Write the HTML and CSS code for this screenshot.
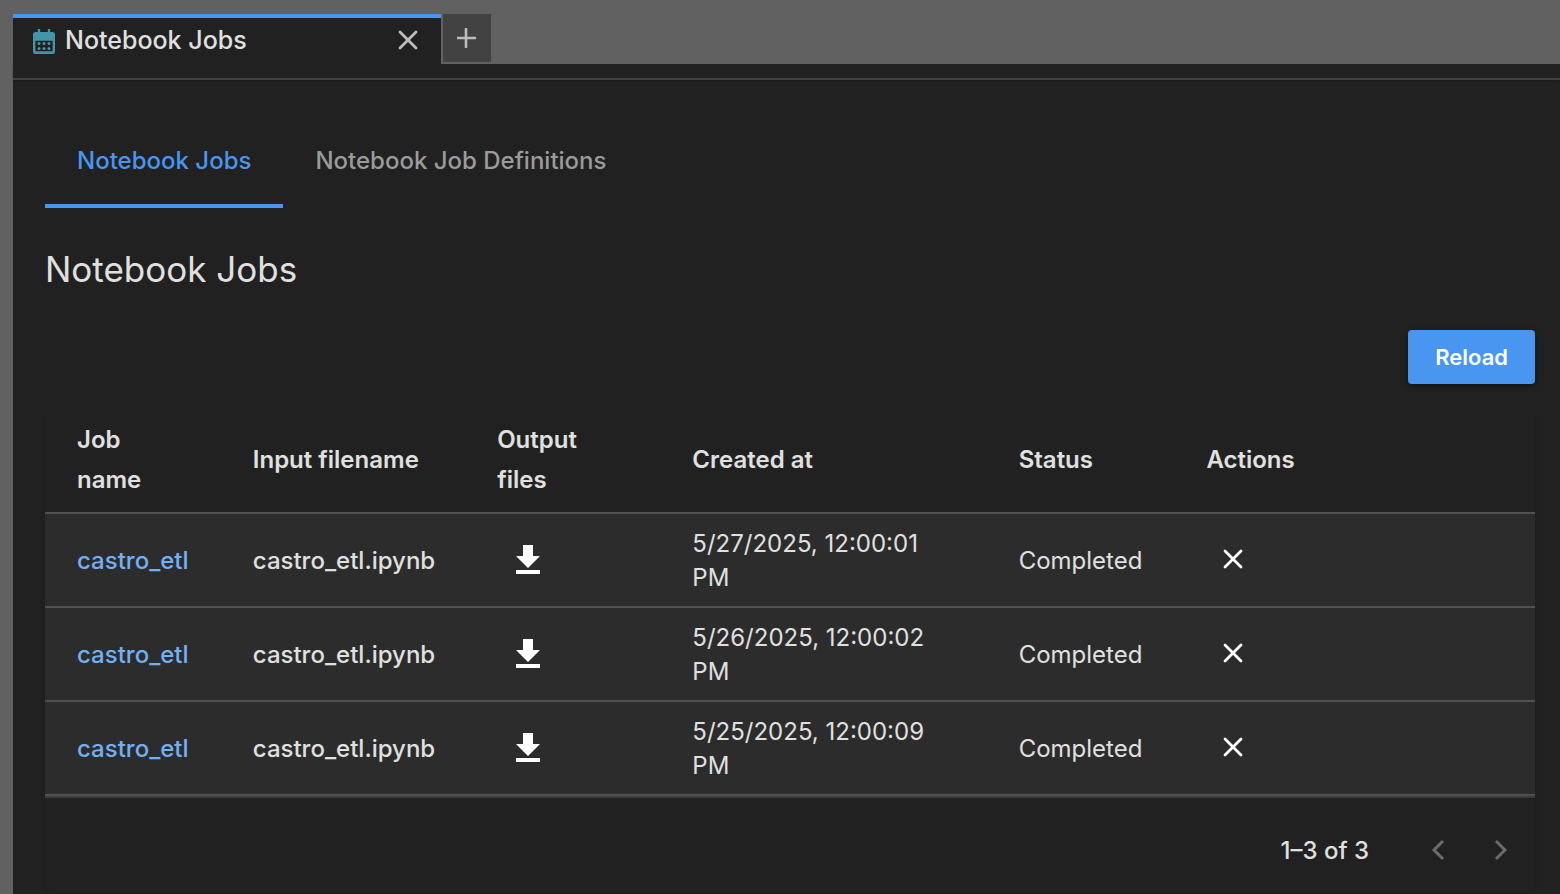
FILE: index.html
```html
<!DOCTYPE html>
<html lang="en">
<head>
    <meta charset="UTF-8">
    <meta name="viewport" content="width=device-width, initial-scale=1.0">
    <title>Notebook Jobs</title>
    <link rel="stylesheet" href="styles.css">
</head>
<body>
    <!-- Shared icons -->
    <svg class="sprite" aria-hidden="true">
        <symbol id="icon-close" viewBox="0 0 24 24">
            <path d="M4 4L20 20M20 4L4 20" fill="none" stroke="currentColor" stroke-width="2.8" stroke-linecap="round"/>
        </symbol>
        <symbol id="icon-download" viewBox="0 0 28 32">
            <path d="M9 1h10v11h7L14 24 2 12h7zM2 26h24v4H2z" fill="currentColor"/>
        </symbol>
    </svg>

    <div class="tab-bar">
        <div class="tab">
            <svg class="tab-icon" viewBox="0 0 22 28" aria-hidden="true">
                <path d="M6 3v5M16 3v5" stroke="#4197a8" stroke-width="2.4" fill="none"/>
                <path fill="#4197a8" fill-rule="evenodd" d="M2.5 6h17A2.5 2.5 0 0 1 22 8.500v17a2.500 2.500 0 0 1-2.500 2.500h-17A2.500 2.500 0 0 1 0 25.500v-17A2.500 2.500 0 0 1 2.500 6zM2.400 14.700v10.600h17.200V14.700z"/>
                <g fill="#4197a8">
                    <circle cx="6" cy="17.600" r="1.500"/>
                    <circle cx="11" cy="17.600" r="1.500"/>
                    <circle cx="16" cy="17.600" r="1.500"/>
                    <circle cx="6" cy="22.400" r="1.500"/>
                    <circle cx="11" cy="22.400" r="1.500"/>
                    <circle cx="16" cy="22.400" r="1.500"/>
                </g>
            </svg>
            <span class="tab-title">Notebook Jobs</span>
            <button class="icon-btn" type="button" aria-label="Close tab">
                <svg class="close-icon" aria-hidden="true"><use href="#icon-close"/></svg>
            </button>
        </div>
        <button class="add-tab" type="button" aria-label="New tab">
            <svg class="add-icon" viewBox="0 0 20 20" aria-hidden="true">
                <path d="M9 1v18M0 10h18" stroke="currentColor" stroke-width="2.6" stroke-linecap="round"/>
            </svg>
        </button>
    </div>

    <main class="panel">
        <div class="toolbar"></div>
        <div class="content">
            <nav class="nav">
                <a class="nav-link active" href="#jobs">Notebook Jobs</a>
                <a class="nav-link" href="#definitions">Notebook Job Definitions</a>
            </nav>

            <h1>Notebook Jobs</h1>

            <div class="actions">
                <button class="reload-btn" type="button">Reload</button>
            </div>

            <div class="jobs">
                <table>
                    <colgroup>
                        <col class="col-name">
                        <col class="col-input">
                        <col class="col-output">
                        <col class="col-created">
                        <col class="col-status">
                        <col class="col-actions">
                    </colgroup>
                    <thead>
                        <tr>
                            <th>Job<br>name</th>
                            <th>Input filename</th>
                            <th>Output<br>files</th>
                            <th>Created at</th>
                            <th>Status</th>
                            <th>Actions</th>
                        </tr>
                    </thead>
                    <tbody>
                        <tr>
                            <td><a href="#job-1">castro_etl</a></td>
                            <td>castro_etl.ipynb</td>
                            <td><button class="icon-btn cell-btn" type="button" aria-label="Download output files"><svg class="download-icon" aria-hidden="true"><use href="#icon-download"/></svg></button></td>
                            <td>5/27/2025, 12:00:01 PM</td>
                            <td>Completed</td>
                            <td><button class="icon-btn cell-btn" type="button" aria-label="Delete job"><svg class="close-icon" aria-hidden="true"><use href="#icon-close"/></svg></button></td>
                        </tr>
                        <tr>
                            <td><a href="#job-2">castro_etl</a></td>
                            <td>castro_etl.ipynb</td>
                            <td><button class="icon-btn cell-btn" type="button" aria-label="Download output files"><svg class="download-icon" aria-hidden="true"><use href="#icon-download"/></svg></button></td>
                            <td>5/26/2025, 12:00:02 PM</td>
                            <td>Completed</td>
                            <td><button class="icon-btn cell-btn" type="button" aria-label="Delete job"><svg class="close-icon" aria-hidden="true"><use href="#icon-close"/></svg></button></td>
                        </tr>
                        <tr>
                            <td><a href="#job-3">castro_etl</a></td>
                            <td>castro_etl.ipynb</td>
                            <td><button class="icon-btn cell-btn" type="button" aria-label="Download output files"><svg class="download-icon" aria-hidden="true"><use href="#icon-download"/></svg></button></td>
                            <td>5/25/2025, 12:00:09 PM</td>
                            <td>Completed</td>
                            <td><button class="icon-btn cell-btn" type="button" aria-label="Delete job"><svg class="close-icon" aria-hidden="true"><use href="#icon-close"/></svg></button></td>
                        </tr>
                    </tbody>
                </table>

                <div class="pagination">
                    <span class="page-count">1–3 of 3</span>
                    <button class="icon-btn page-btn" type="button" aria-label="Previous page" disabled>
                        <svg class="chevron" viewBox="0 0 14 22" aria-hidden="true"><path d="M12 2L3 11l9 9" fill="none" stroke="currentColor" stroke-width="3"/></svg>
                    </button>
                    <button class="icon-btn page-btn" type="button" aria-label="Next page" disabled>
                        <svg class="chevron" viewBox="0 0 14 22" aria-hidden="true"><path d="M3 2l9 9-9 9" fill="none" stroke="currentColor" stroke-width="3"/></svg>
                    </button>
                </div>
            </div>
        </div>
    </main>
</body>
</html>
```
FILE: styles.css
```css
* {
    box-sizing: border-box;
    margin: 0;
    padding: 0;
}

body {
    font-family: Inter, "Liberation Sans", sans-serif;
    font-size: 24px;
    line-height: 34px;
    color: #e0e0e0;
    background: #616161;
    min-height: 100vh;
    display: flex;
    flex-direction: column;
    padding: 14px 0 0 13px;
}

button {
    font: inherit;
    color: inherit;
    border: none;
    cursor: pointer;
}

a {
    color: #72b0f4;
    text-decoration: none;
}

svg {
    display: block;
}

.sprite {
    display: none;
}

/* Document tabs */
.tab-bar {
    display: flex;
    align-items: flex-start;
    gap: 2px;
}

.tab {
    display: flex;
    align-items: center;
    width: 428px;
    height: 50px;
    padding: 0 20px 2px;
    border-top: 4px solid #4896f0;
    background: #212121;
}

.tab-icon {
    width: 22px;
    height: 28px;
    margin-right: 10px;
}

.tab-title {
    flex: 1;
    font-size: 25px;
    font-weight: 500;
}

.icon-btn {
    display: flex;
    align-items: center;
    justify-content: center;
    background: none;
}

.tab .icon-btn {
    width: 26px;
    height: 26px;
    color: #bdbdbd;
}

.close-icon {
    width: 24px;
    height: 24px;
}

.add-tab {
    display: flex;
    align-items: center;
    justify-content: center;
    width: 48px;
    height: 48px;
    color: #bdbdbd;
    background: #424242;
}

.add-icon {
    width: 20px;
    height: 20px;
}

/* Main panel */
.panel {
    flex: 1;
    background: #212121;
}

.toolbar {
    height: 16px;
    border-bottom: 2px solid #424242;
    box-shadow: 0 1px 2px rgba(0, 0, 0, 0.3);
}

.content {
    padding: 32px 25px 0 32px;
}

.nav {
    display: flex;
}

.nav-link {
    height: 96px;
    padding: 32px 32px 0;
    color: #9b9b9b;
    font-weight: 500;
}

.nav-link.active {
    color: #4896f0;
    border-bottom: 4px solid #4896f0;
}

h1 {
    margin-top: 36px;
    font-size: 35px;
    font-weight: 400;
    line-height: 50px;
}

.actions {
    display: flex;
    justify-content: flex-end;
    margin: 36px 0 24px;
}

.reload-btn {
    padding: 10px 27px;
    border-radius: 4px;
    color: #fff;
    background: #4896f0;
    font-size: 22px;
    font-weight: 600;
    box-shadow: 0 2px 6px rgba(0, 0, 0, 0.4);
}

/* Jobs table */
.jobs {
    border-radius: 8px;
    box-shadow: 0 2px 4px rgba(0, 0, 0, 0.12);
}

table {
    width: 100%;
    table-layout: fixed;
    border-collapse: separate;
    border-spacing: 0;
    border-bottom: 2px solid #3b3b3b;
}

.col-name {
    width: 11.8%;
}

.col-input {
    width: 16.4%;
}

.col-output {
    width: 13.1%;
}

.col-created {
    width: 21.9%;
}

.col-status {
    width: 12.6%;
}

.col-actions {
    width: 24.2%;
}

th,
td {
    padding: 12px 32px;
    text-align: left;
    vertical-align: middle;
    border-bottom: 2px solid #515151;
}

td {
    padding: 13px 32px 11px;
}

td:nth-child(-n+2),
td:nth-child(5) {
    white-space: nowrap;
}

td:nth-child(-n+2) {
    font-weight: 500;
}

th {
    padding-right: 16px;
    font-weight: 600;
    line-height: 40px;
}

tbody tr {
    background: #2c2c2c;
}

.cell-btn {
    width: 62px;
    height: 42px;
    padding-bottom: 2px;
    color: #fff;
}

td:last-child .cell-btn {
    width: 54px;
    padding-bottom: 4px;
}

.download-icon {
    width: 28px;
    height: 32px;
}

/* Pagination */
.pagination {
    display: flex;
    align-items: center;
    justify-content: flex-end;
    padding: 36px 4px 24px;
}

.page-count {
    margin-right: 38px;
    font-weight: 500;
}

.page-btn {
    width: 62px;
    height: 34px;
    padding-bottom: 2px;
    color: #6b6b6b;
    cursor: default;
}

.chevron {
    width: 14px;
    height: 22px;
}
```
